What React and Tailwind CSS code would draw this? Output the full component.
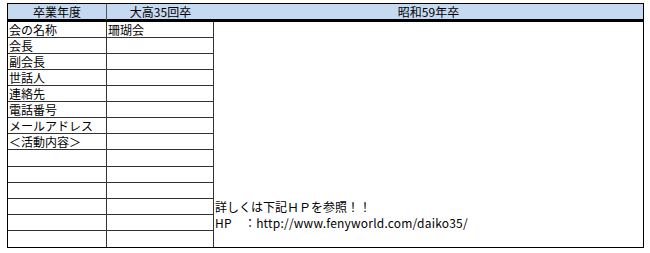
import React from 'react'

const ROWS = [
    { label: '会の名称', name: '珊瑚会', note: '' },
    { label: '会長', name: '', note: '' },
    { label: '副会長', name: '', note: '' },
    { label: '世話人', name: '', note: '' },
    { label: '連絡先', name: '', note: '' },
    { label: '電話番号', name: '', note: '' },
    { label: 'メールアドレス', name: '', note: '' },
    { label: '＜活動内容＞', name: '', note: '' },
    { label: '', name: '', note: '' },
    { label: '', name: '', note: '' },
    { label: '', name: '', note: '' },
    { label: '', name: '', note: '詳しくは下記ＨＰを参照！！' },
    { label: '', name: '', note: 'HP　：http://www.fenyworld.com/daiko35/', wide: true },
    { label: '', name: '', note: '' },
]

const App = () => {
    return (
        <div
            className="h-[253px] w-[650px] bg-white pl-[7px] pt-[3px] text-[12px] text-black"
            style={{ fontFamily: '"Noto Sans CJK JP", "Liberation Sans", sans-serif' }}
        >
            <div className="w-[637px]">
                {/* Header */}
                <div className="grid h-[19px] grid-cols-[99px_107px_1fr] border-x border-t border-b-[3px] border-black border-b-double bg-[#c5d9f1] leading-[16px]">
                    <div className="border-r border-[#555] text-center">卒業年度</div>
                    <div className="text-center">大高35回卒</div>
                    <div className="text-center">昭和59年卒</div>
                </div>

                {/* Body */}
                <div className="grid grid-cols-[99px_107px_1fr] border-x border-b border-black">
                    {ROWS.map((row, i) => {
                        const last = i === ROWS.length - 1
                        const h = i === 8 ? 'h-[17px]' : 'h-[16px]'
                        return (
                            <React.Fragment key={i}>
                                <div className={`${h} whitespace-nowrap border-r border-[#333] pl-[1px] leading-[16px] ${last ? '' : 'border-b'}`}>
                                    {row.label}
                                </div>
                                <div className={`${h} whitespace-nowrap border-r border-[#333] pl-[1px] leading-[16px] ${last ? '' : 'border-b'}`}>
                                    {row.name}
                                </div>
                                <div className={`${h} whitespace-nowrap pl-[1px] leading-[16px] ${row.wide ? 'tracking-[0.2px]' : ''}`}>
                                    {row.note}
                                </div>
                            </React.Fragment>
                        )
                    })}
                </div>
            </div>
        </div>
    )
}

export default App
